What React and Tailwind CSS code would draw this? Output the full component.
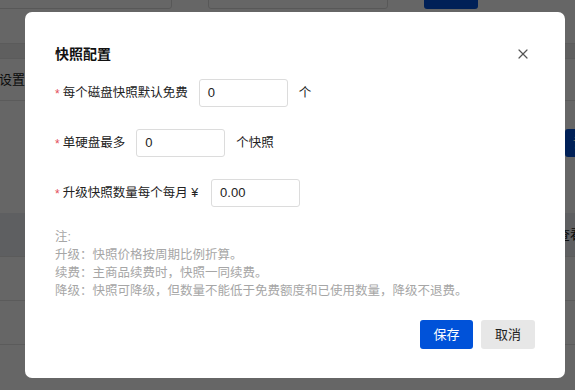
import { X } from 'lucide-react';

const font = { fontFamily: '"Liberation Sans", "Noto Sans CJK SC", sans-serif' };

const FieldRow = ({ label, value, suffix, gap = 'ml-[11px]' }) => (
  <div className="flex items-center h-[28px]">
    <span className="text-[#e34d59] text-[12px] mr-[3px] mt-[2px]">*</span>
    <span className="text-[12.5px] text-[#222]">{label}</span>
    <div className={`${gap} w-[89px] h-[28px] border border-[#dcdcdc] rounded-[3px] flex items-center px-[8px] text-[13px] text-[#222]`}>
      {value}
    </div>
    {suffix && <span className="ml-[11px] text-[12.5px] text-[#222]">{suffix}</span>}
  </div>
);

const App = () => {
  return (
    <div className="relative w-[575px] h-[390px] overflow-hidden bg-white" style={font}>
      {/* page behind the dialog */}
      <div className="-mt-[20px]">
        <div className="flex items-end h-[29px]">
          <div className="-ml-[10px] w-[182px] h-[29px] border border-[#dcdcdc] rounded-[3px]" />
          <div className="ml-[36px] w-[180px] h-[29px] border border-[#dcdcdc] rounded-[3px]" />
          <div className="ml-[36px] w-[54px] h-[30px] bg-[#0052d9] rounded-[3px]" />
        </div>
        <div className="mt-[34px] h-[16px] bg-[#eeeeee] border-y border-[#e3e3e3]" />
        <div className="h-[42px] flex items-center border-b border-[#e3e3e3]">
          <span className="-ml-[1px] text-[13px] text-[#222]">设置</span>
        </div>
        <div className="h-[112px] flex justify-end pt-[28px]">
          <div className="w-[40px] h-[28px] bg-[#0052d9] rounded-[3px] -mr-[30px] text-white text-[13px] flex items-center pl-[8px]">设置</div>
        </div>
        <div className="h-[44px] bg-[#ebeef2] border-b border-[#e3e3e3] flex justify-end items-center">
          <span className="text-[13px] text-[#222] -mr-[8px]">查看</span>
        </div>
        <div className="h-[44px] border-b border-[#e3e3e3]" />
        <div className="h-[44px] border-b border-[#e3e3e3]" />
      </div>

      {/* overlay */}
      <div className="absolute inset-0 bg-black/60" />

      {/* dialog */}
      <div className="absolute left-[25px] top-[12px] w-[540px] h-[366px] bg-white rounded-[7px] px-[30px] pt-[32px] pb-[29px] flex flex-col">
        <div className="flex items-center justify-between h-[20px]">
          <h2 className="text-[14px] font-bold text-[#111]">快照配置</h2>
          <button className="w-[24px] h-[24px] flex items-center justify-center text-[#555]">
            <X size={16} strokeWidth={1.8} />
          </button>
        </div>

        <div className="mt-[15px] flex flex-col gap-[22px]">
          <FieldRow label="每个磁盘快照默认免费" value="0" suffix="个" />
          <FieldRow label="单硬盘最多" value="0" suffix="个快照" />
          <FieldRow label="升级快照数量每个每月 ¥" value="0.00" gap="ml-[13px]" />
        </div>

        <div className="mt-[21px] text-[12.5px] leading-[18px] text-[#a6a6a6]">
          <p>注:</p>
          <p>升级：快照价格按周期比例折算。</p>
          <p>续费：主商品续费时，快照一同续费。</p>
          <p>降级：快照可降级，但数量不能低于免费额度和已使用数量，降级不退费。</p>
        </div>

        <div className="mt-auto flex justify-end gap-[8px]">
          <button className="w-[53px] h-[29px] rounded-[3px] bg-[#0052d9] text-white text-[13px]">保存</button>
          <button className="w-[54px] h-[29px] rounded-[3px] bg-[#e7e7e7] text-[#222] text-[13px]">取消</button>
        </div>
      </div>
    </div>
  );
};

export default App;
